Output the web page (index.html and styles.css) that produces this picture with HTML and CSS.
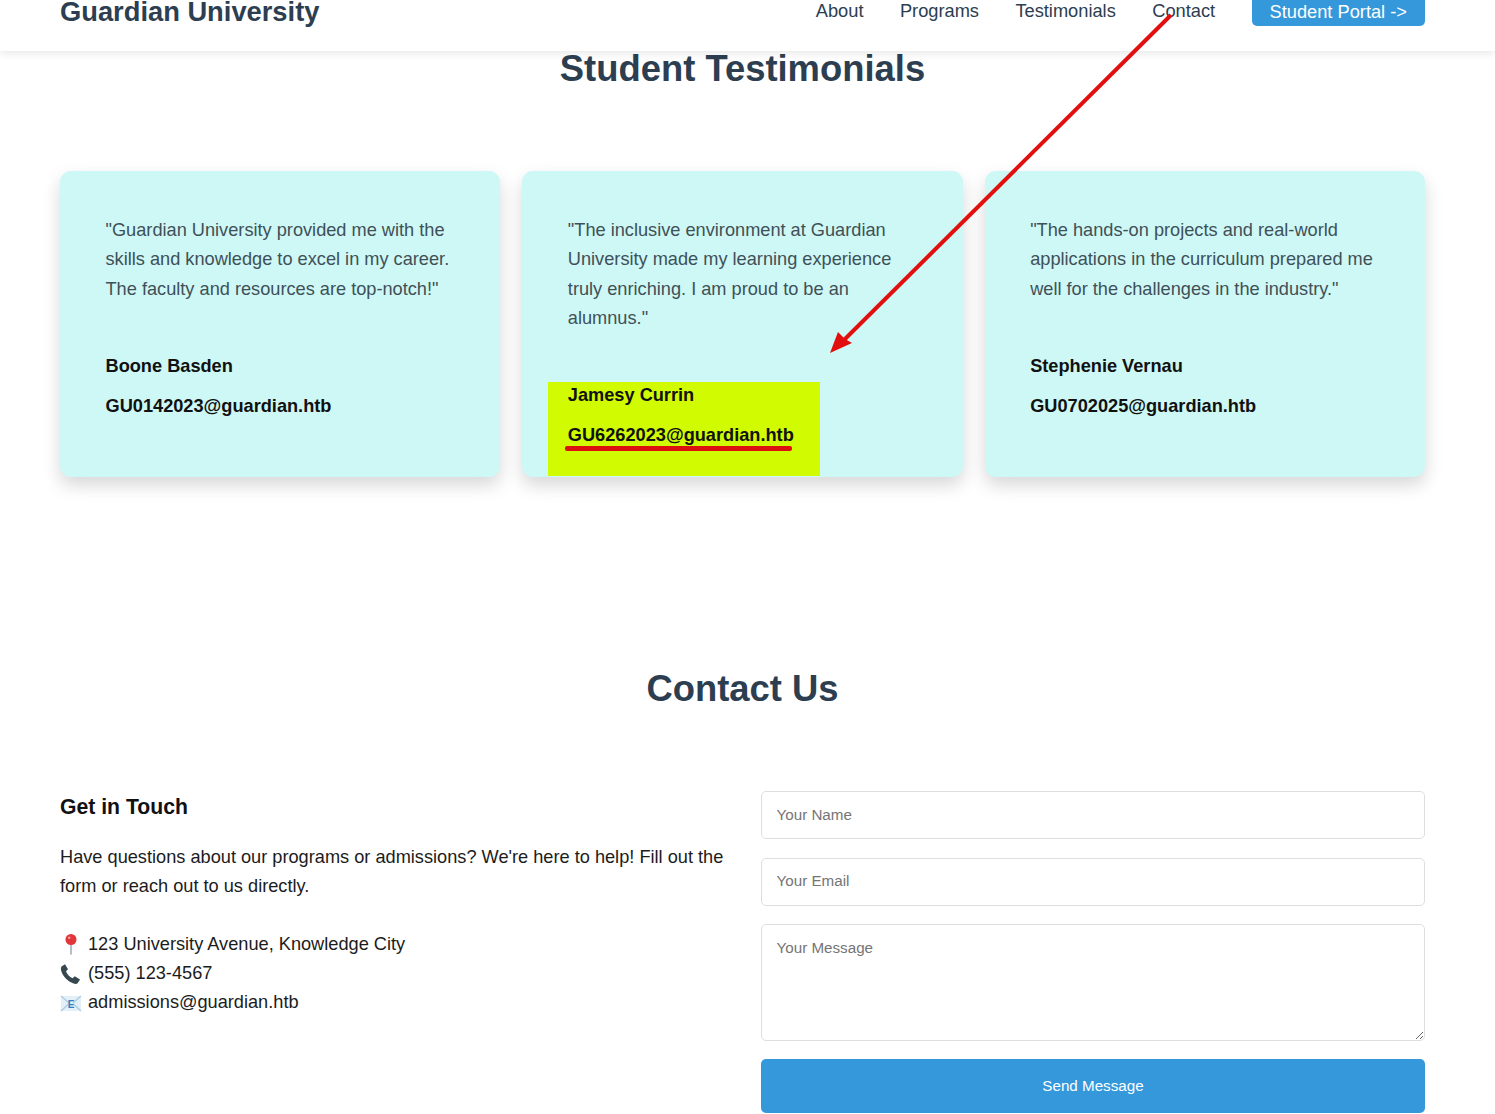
FILE: index.html
```html
<!DOCTYPE html>
<html lang="en">
<head>
    <meta charset="UTF-8">
    <meta name="viewport" content="width=device-width, initial-scale=1.0">
    <title>Guardian University</title>
    <link rel="stylesheet" href="styles.css">
</head>
<body>
    <header class="site-header">
        <div class="logo">Guardian University</div>
        <nav class="navbar">
            <a href="#about">About</a>
            <a href="#programs">Programs</a>
            <a href="#testimonials">Testimonials</a>
            <a href="#contact">Contact</a>
            <a href="#portal" class="portal-btn">Student Portal -&gt;</a>
        </nav>
    </header>

    <section class="testimonials" id="testimonials">
        <h2>Student Testimonials</h2>
        <div class="card-row">
            <div class="card">
                <p class="quote">"Guardian University provided me with the skills and knowledge to excel in my career. The faculty and resources are top-notch!"</p>
                <p class="student">Boone Basden</p>
                <p class="student">GU0142023@guardian.htb</p>
            </div>
            <div class="card">
                <div class="highlight"></div>
                <p class="quote">"The inclusive environment at Guardian University made my learning experience truly enriching. I am proud to be an alumnus."</p>
                <p class="student">Jamesy Currin</p>
                <p class="student"><span class="marked">GU6262023@guardian.htb</span></p>
            </div>
            <div class="card">
                <p class="quote">"The hands-on projects and real-world applications in the curriculum prepared me well for the challenges in the industry."</p>
                <p class="student">Stephenie Vernau</p>
                <p class="student">GU0702025@guardian.htb</p>
            </div>
        </div>
    </section>

    <section class="contact" id="contact">
        <h2>Contact Us</h2>
        <div class="contact-grid">
            <div class="contact-info">
                <h3>Get in Touch</h3>
                <p class="intro">Have questions about our programs or admissions? We're here to help! Fill out the form or reach out to us directly.</p>
                <div class="info-line">
                    <svg class="info-icon" viewBox="0 0 22 22"><path d="M11 11.5V21" stroke="#9fb0b8" stroke-width="1.6" stroke-linecap="round"/><circle cx="11" cy="6.5" r="5.5" fill="#e2363a"/><circle cx="9.2" cy="4.8" r="1.3" fill="#f59a9a"/></svg>
                    123 University Avenue, Knowledge City
                </div>
                <div class="info-line">
                    <svg class="info-icon" viewBox="0 0 22 22"><path d="M1.5 3.5 5 1.2l3 5-2 2c.8 2.8 3.4 5.600 6.600 7l2.200-1.900 5.200 3.300-2.400 3.600c-.9.900-2.400.900-4 .300C7.600 18.300 3 13.500 1.200 7.700.8 6 .8 4.600 1.500 3.500Z" fill="#37474f"/></svg>
                    (555) 123-4567
                </div>
                <div class="info-line">
                    <svg class="info-icon" viewBox="0 0 22 22"><path d="M1 4h20v15H1z" fill="#e3f0f8"/><path d="M1 4l8 7M21 4l-8 7M1 19l7-6.500M21 19l-7-6.500" stroke="#a9cbe2" stroke-width="1.200" fill="none"/><text x="11" y="16" class="mail-letter">E</text></svg>
                    admissions@guardian.htb
                </div>
            </div>
            <form class="contact-form">
                <input type="text" placeholder="Your Name">
                <input type="email" placeholder="Your Email">
                <textarea placeholder="Your Message"></textarea>
                <button type="button">Send Message</button>
            </form>
        </div>
    </section>

    <!-- annotation drawn over the screenshot -->
    <svg class="arrow" width="1495" height="1114" viewBox="0 0 1495 1114">
        <path d="M1171 15 843 341" stroke="#e20f0f" stroke-width="4" fill="none"/>
        <path d="M830 353 838 332 845 339 852 343Z" fill="#e20f0f"/>
    </svg>
</body>
</html>
```

FILE: styles.css
```css
* {
    box-sizing: border-box;
    margin: 0;
    padding: 0;
}

html, body {
    height: 1114px;
    overflow: hidden;
}

body {
    font-family: "Liberation Sans", Arial, sans-serif;
    font-size: 18.25px;
    line-height: 29.3px;
    color: #2c3e50;
    background-color: #fff;
    position: relative;
}

.site-header {
    height: 51px;
    padding: 0 70px 25px 60px;
    display: flex;
    justify-content: space-between;
    align-items: flex-end;
    background-color: #fff;
    box-shadow: 0 2px 9px rgba(0, 0, 0, 0.1);
    position: relative;
}

.logo {
    font-size: 27.3px;
    font-weight: bold;
}

.navbar {
    display: flex;
    align-items: flex-end;
    gap: 36.4px;
}

.navbar a {
    color: #2c3e50;
    text-decoration: none;
    margin-bottom: 0.5px;
}

.navbar .portal-btn {
    display: block;
    width: 173.5px;
    height: 44px;
    padding-top: 14.5px;
    margin-bottom: 0;
    text-align: center;
    color: #fff;
    background-color: #3498db;
    border-radius: 5px;
}

h2 {
    font-size: 36.4px;
    line-height: 44px;
    text-align: center;
    color: #2c3e50;
}

.testimonials {
    padding: 0 70px 0 60px;
    height: 591px;
}

.testimonials h2 {
    margin-top: -4px;
}

.card-row {
    margin-top: 80px;
    display: grid;
    grid-template-columns: repeat(3, 1fr);
    gap: 22px;
}

.card {
    position: relative;
    padding: 45px 45px 26.5px 45.5px;
    font-size: 18.2px;
    background-color: #cef8f5;
    border-radius: 11px;
    box-shadow: 0 8px 18px rgba(0, 0, 0, 0.16);
}

.highlight {
    position: absolute;
    left: 26px;
    bottom: 1px;
    width: 272px;
    height: 94px;
    background-color: #d0fb00;
}

.quote {
    position: relative;
    color: #3f5058;
    margin-bottom: 48px;
}

.student {
    position: relative;
    font-weight: bold;
    color: #111;
    margin-top: 11px;
}

.marked {
    position: relative;
    display: inline-block;
}

.marked::after {
    content: "";
    position: absolute;
    left: -3px;
    right: 2px;
    bottom: 0;
    height: 4.5px;
    border-radius: 2px;
    background-color: #dd1010;
}

.contact {
    padding: 0 70px 0 60px;
}

.contact h2 {
    padding-top: 29px;
}

.contact-grid {
    margin-top: 80px;
    display: grid;
    grid-template-columns: 1fr 664px;
    gap: 31px;
}

.contact-info {
    color: #1c1c1c;
    font-size: 18.2px;
}

.contact-info h3 {
    font-size: 21.2px;
    line-height: 32px;
    color: #111;
}

.intro {
    margin-top: 20px;
    margin-bottom: 28px;
}

.info-line {
    display: flex;
    align-items: center;
    gap: 6px;
}

.info-icon {
    width: 22px;
    height: 22px;
    flex: none;
}

.mail-letter {
    font-size: 10px;
    font-weight: bold;
    fill: #2f7fc1;
    text-anchor: middle;
}

.contact-form {
    display: flex;
    flex-direction: column;
    gap: 18.5px;
}

input, textarea {
    display: block;
    width: 100%;
    padding: 0 14.5px;
    font-family: "Liberation Sans", Arial, sans-serif;
    font-size: 15.2px;
    color: #333;
    background-color: #fff;
    border: 1px solid #dcdfe1;
    border-radius: 5px;
}

input {
    height: 48px;
    padding-bottom: 2px;
}

textarea {
    height: 116.5px;
    padding-top: 13px;
    line-height: 20px;
}

::placeholder {
    color: #757575;
}

button {
    height: 54px;
    padding-bottom: 2px;
    font-family: "Liberation Sans", Arial, sans-serif;
    font-size: 15.2px;
    color: #fff;
    background-color: #3498db;
    border: none;
    border-radius: 5px;
}

.arrow {
    position: absolute;
    left: 0;
    top: 0;
    pointer-events: none;
}
```
